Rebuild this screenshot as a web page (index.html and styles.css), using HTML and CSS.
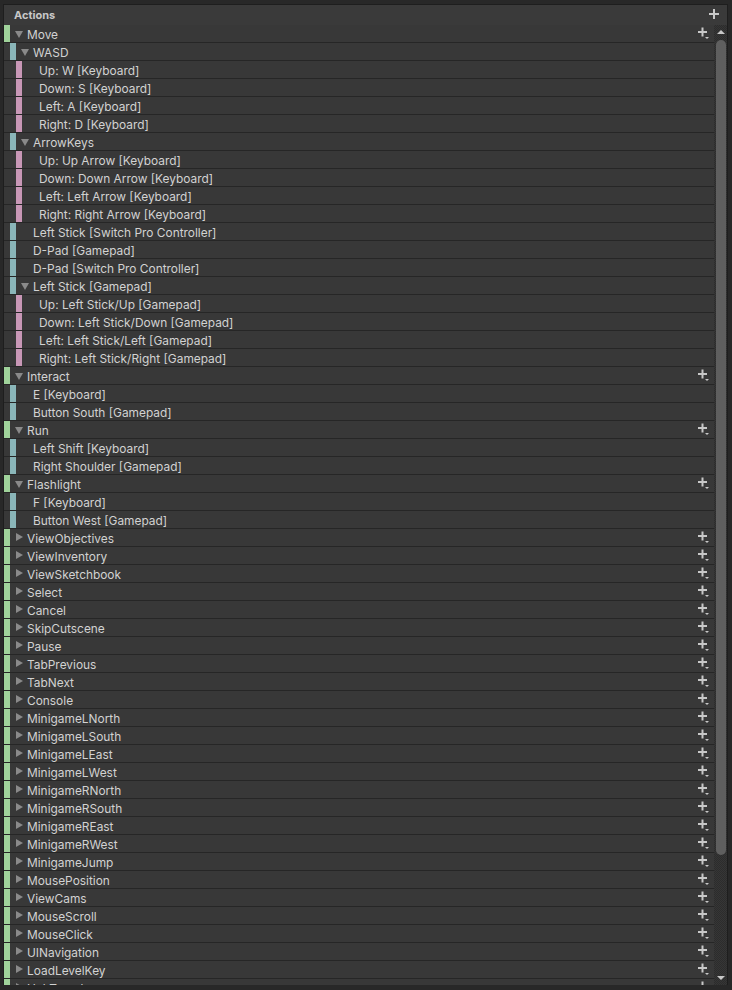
FILE: index.html
```html
<!DOCTYPE html>
<html lang="en">
<head>
    <meta charset="UTF-8">
    <meta name="viewport" content="width=device-width, initial-scale=1.0">
    <title>Input Actions</title>
    <link rel="stylesheet" href="styles.css">
</head>
<body>
    <div class="actions-panel">
        <div class="panel-header">
            <span class="panel-title">Actions</span>
            <button class="header-add" title="Add Action">
                <svg width="10" height="10" viewBox="0 0 10 10"><path d="M5 0v10M0 5h10" stroke="#c8c8c8" stroke-width="2"/></svg>
            </button>
        </div>
        <div class="panel-body">
            <ul id="action-tree" class="action-tree"></ul>
            <div class="scrollbar">
                <span class="scroll-arrow up"></span>
                <div class="scroll-track"><div class="scroll-thumb"></div></div>
                <span class="scroll-arrow down"></span>
            </div>
        </div>
    </div>
    <script>
        document.addEventListener("DOMContentLoaded", function () {
            // composite bindings have parts, plain bindings are just strings
            const actions = [
                { name: "Move", open: true, bindings: [
                    { name: "WASD", parts: ["Up: W [Keyboard]", "Down: S [Keyboard]", "Left: A [Keyboard]", "Right: D [Keyboard]"] },
                    { name: "ArrowKeys", parts: ["Up: Up Arrow [Keyboard]", "Down: Down Arrow [Keyboard]", "Left: Left Arrow [Keyboard]", "Right: Right Arrow [Keyboard]"] },
                    "Left Stick [Switch Pro Controller]",
                    "D-Pad [Gamepad]",
                    "D-Pad [Switch Pro Controller]",
                    { name: "Left Stick [Gamepad]", parts: ["Up: Left Stick/Up [Gamepad]", "Down: Left Stick/Down [Gamepad]", "Left: Left Stick/Left [Gamepad]", "Right: Left Stick/Right [Gamepad]"] }
                ] },
                { name: "Interact", open: true, bindings: ["E [Keyboard]", "Button South [Gamepad]"] },
                { name: "Run", open: true, bindings: ["Left Shift [Keyboard]", "Right Shoulder [Gamepad]"] },
                { name: "Flashlight", open: true, bindings: ["F [Keyboard]", "Button West [Gamepad]"] },
                { name: "ViewObjectives" }, { name: "ViewInventory" }, { name: "ViewSketchbook" },
                { name: "Select" }, { name: "Cancel" }, { name: "SkipCutscene" }, { name: "Pause" },
                { name: "TabPrevious" }, { name: "TabNext" }, { name: "Console" },
                { name: "MinigameLNorth" }, { name: "MinigameLSouth" }, { name: "MinigameLEast" }, { name: "MinigameLWest" },
                { name: "MinigameRNorth" }, { name: "MinigameRSouth" }, { name: "MinigameREast" }, { name: "MinigameRWest" },
                { name: "MinigameJump" }, { name: "MousePosition" }, { name: "ViewCams" }, { name: "MouseScroll" },
                { name: "MouseClick" }, { name: "UINavigation" }, { name: "LoadLevelKey" }, { name: "HubTravel" }
            ];

            const tree = document.getElementById("action-tree");
            const addIcon = '<svg width="12" height="12" viewBox="0 0 12 12">' +
                '<path d="M4.5 0.5v9M0 5h9" stroke="#c8c8c8" stroke-width="2"/>' +
                '<path d="M7 10h4l-2 2z" fill="#c8c8c8"/></svg>';

            function addRow(kind, label, caret) {
                const li = document.createElement("li");
                li.className = "row " + kind;
                let html = '<span class="bar"></span><span class="caret ' + caret + '"></span>';
                html += '<span class="label">' + label + '</span>';
                if (kind === "action") {
                    html += '<button class="row-add">' + addIcon + '</button>';
                }
                li.innerHTML = html;
                tree.appendChild(li);
            }

            actions.forEach(function (action) {
                addRow("action", action.name, action.open ? "open" : "closed");
                (action.bindings || []).forEach(function (b) {
                    if (typeof b === "string") {
                        addRow("binding", b, "none");
                    } else {
                        addRow("composite", b.name, "open");
                        b.parts.forEach(function (p) { addRow("part", p, "none"); });
                    }
                });
            });
        });
    </script>
</body>
</html>
```

FILE: styles.css
```css
body {
    margin: 0;
    padding: 4px 0 0 3px;
    background: #282828;
    font-family: Inter, "Noto Sans", sans-serif;
    color: #d2d2d2;
    overflow: hidden;
}
.actions-panel {
    width: 723px;
    height: 980px;
    border: 1px solid #1e1e1e;
    border-bottom: none;
    background: #383838;
    display: flex;
    flex-direction: column;
}
.panel-header {
    height: 20px;
    display: flex;
    align-items: center;
    background: #3a3a3a;
    padding: 0 8px 0 10px;
}
.panel-title {
    font-size: 11px;
    font-weight: bold;
    color: #c8c8c8;
}
.header-add {
    margin-left: auto;
    background: none;
    border: none;
    padding: 0;
    display: flex;
    margin-top: -2px;
}
.panel-body {
    flex: 1;
    display: flex;
    min-height: 0;
}
.action-tree {
    flex: 1;
    list-style: none;
    margin: 0;
    padding: 0;
    overflow: hidden;
}
.row {
    height: 17px;
    display: flex;
    align-items: stretch;
    border-bottom: 1px solid #262626;
    font-size: 11.9px;
    line-height: 17px;
}
.bar {
    width: 6px;
    flex-shrink: 0;
}
.action .bar { background: #a0d39b; }
.composite .bar, .binding .bar { background: #8ab6b9; margin-left: 6px; }
.part .bar { background: #c897b6; margin-left: 12px; }
.caret {
    width: 17px;
    flex-shrink: 0;
    position: relative;
}
.caret.open::before,
.caret.closed::before {
    content: "";
    position: absolute;
    width: 0;
    height: 0;
}
.caret.open::before {
    left: 5px;
    top: 6px;
    border-left: 4px solid transparent;
    border-right: 4px solid transparent;
    border-top: 7px solid #8a8a8a;
}
.caret.closed::before {
    left: 6px;
    top: 4px;
    border-top: 4px solid transparent;
    border-bottom: 4px solid transparent;
    border-left: 7px solid #8a8a8a;
}
.label {
    white-space: nowrap;
    padding-top: 1px;
}
.row-add {
    margin-left: auto;
    margin-right: 4px;
    background: none;
    border: none;
    padding: 0;
    display: flex;
    align-items: center;
    margin-top: -1px;
}
.scrollbar {
    width: 13px;
    display: flex;
    flex-direction: column;
    background: repeating-conic-gradient(#2c2c2c 0 25%, #363636 0 50%) 0 0 / 2px 2px;
}
.scroll-arrow {
    height: 14px;
    position: relative;
    flex-shrink: 0;
}
.scroll-arrow::before {
    content: "";
    position: absolute;
    left: 3px;
    border-left: 4px solid transparent;
    border-right: 4px solid transparent;
}
.scroll-arrow.up::before {
    top: 5px;
    border-bottom: 4px solid #c8c8c8;
}
.scroll-arrow.down::before {
    top: 5px;
    border-top: 4px solid #c8c8c8;
}
.scroll-track {
    flex: 1;
    padding: 1px 1px 0 2px;
}
.scroll-thumb {
    height: 815px;
    background: #5f5f5f;
    border-radius: 5px;
}
```
